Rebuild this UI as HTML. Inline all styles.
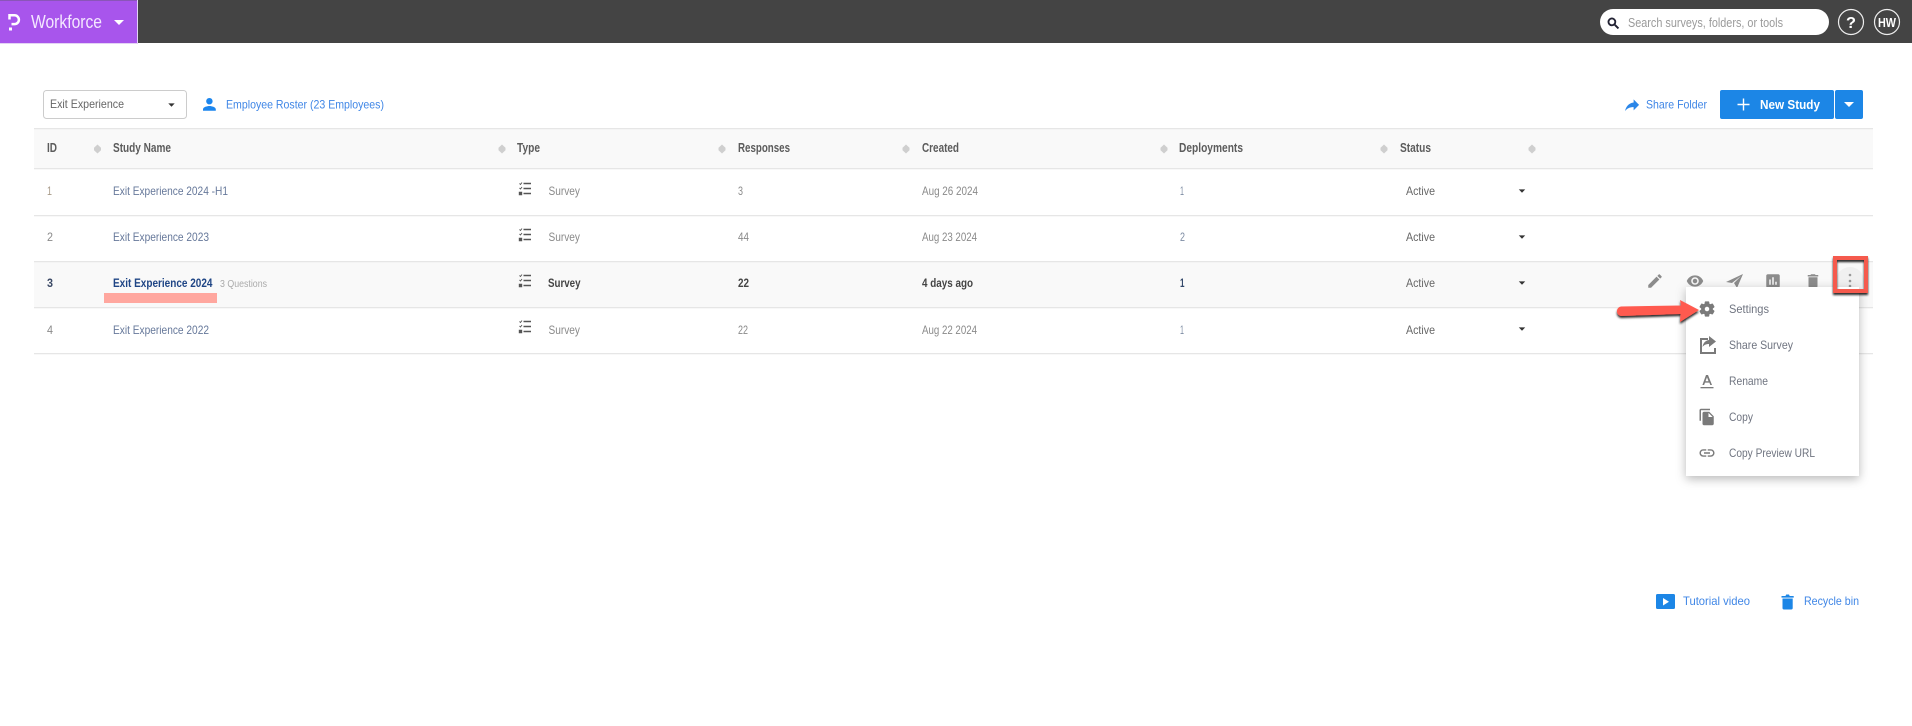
<!DOCTYPE html>
<html><head><meta charset="utf-8"><title>Workforce</title>
<style>
html,body{margin:0;padding:0;background:#fff;width:1912px;height:726px;overflow:hidden}
svg{display:block}
text{font-family:"Liberation Sans",sans-serif;font-size:12px;fill:#8a8a8a}
.h{font-size:12.5px;font-weight:bold;fill:#5c5c5c}
.st{fill:#66789a}
.b{font-weight:bold;fill:#444}
.bl{fill:#3f86e6}
.m{fill:#6f7480}
.a{fill:#666}
.dep{fill:#7d8ca3}
</style></head><body>
<svg width="1912" height="726" viewBox="0 0 1912 726" xmlns="http://www.w3.org/2000/svg">
<defs>
<filter id="ms" x="-20%" y="-20%" width="140%" height="140%"><feDropShadow dx="0" dy="3" stdDeviation="5" flood-color="#000" flood-opacity=".28"/></filter>
<filter id="as" x="-10%" y="-30%" width="120%" height="180%"><feDropShadow dx="0" dy="2" stdDeviation="1" flood-color="#000" flood-opacity=".85"/></filter>
<g id="s"><path d="M0-4.500 3.500-1.200V1.200L0 4.500-3.500 1.200V-1.200Z" fill="#cfcfcf"/></g>
<g id="c"><path d="M-3.200-1.600H3.200L0 1.800Z" fill="#333"/></g>
<g id="l" fill="none" stroke="#555" stroke-width="1.400"><path d="M4.500 1.500h7.500M4.500 6.500h7.500M4.500 11.500h7.500"/><path d="M.5 1.500l1 1 1.500-2M.5 6l1 1 1.500-2" stroke-width=".9"/><path d="M.5 10.500h2v2h-2z" fill="#555"/></g>
</defs>

<!-- top bar -->
<rect width="1912" height="43" fill="#444"/>
<rect width="138" height="44" fill="#e3d2f5"/>
<rect width="137" height="43" fill="#a855ec"/>
<rect width="137" height="1" fill="#8a55b8"/>
<path d="M9.500 19.500V15.300H14.500a4.400 4.400 0 0 1 0 8.800H11.500" fill="none" stroke="#fff" stroke-width="2.500"/>
<rect x="9" y="27.500" width="3" height="3" fill="#fff"/>
<text x="31" y="28" textLength="71" lengthAdjust="spacingAndGlyphs" style="font-size:18px;fill:#f4e8ff">Workforce</text>
<path d="M114 20H124L119 25Z" fill="#fff"/>

<rect x="1600" y="9" width="229" height="26" rx="13" fill="#fff"/>
<g transform="translate(1606,16) scale(.62)"><path d="M15.500 14h-.79l-.28-.27C15.410 12.590 16 11.110 16 9.500 16 5.910 13.090 3 9.500 3S3 5.910 3 9.500 5.910 16 9.500 16c1.610 0 3.090-.59 4.230-1.570l.27.28v.79l5 4.990L20.490 19l-4.990-5zm-6 0C7.010 14 5 11.990 5 9.500S7.010 5 9.500 5 14 7.010 14 9.500 11.990 14 9.500 14z" fill="#223" stroke="#223" stroke-width="1"/></g>
<text x="1628" y="27" textLength="155" lengthAdjust="spacingAndGlyphs" style="font-size:12.500px;fill:#9a9a9a">Search surveys, folders, or tools</text>
<circle cx="1851" cy="22" r="12.500" fill="none" stroke="#eee" stroke-width="1.200"/>
<text x="1846" y="28" textLength="10" lengthAdjust="spacingAndGlyphs" style="font-size:16px;font-weight:bold;fill:#fff">?</text>
<circle cx="1887" cy="22" r="12.500" fill="none" stroke="#eee" stroke-width="1.200"/>
<text x="1878" y="27" textLength="18" lengthAdjust="spacingAndGlyphs" style="font-size:13px;font-weight:bold;fill:#fff">HW</text>

<!-- toolbar -->
<rect x="43.500" y="90.500" width="143" height="28" rx="3" fill="#fff" stroke="#ccc"/>
<text x="50" y="108" textLength="74" lengthAdjust="spacingAndGlyphs" style="fill:#666">Exit Experience</text>
<use href="#c" x="171.500" y="105"/>
<g transform="translate(199.800,94.800) scale(.8)"><path d="M12 12c2.210 0 4-1.790 4-4s-1.790-4-4-4-4 1.790-4 4 1.790 4 4 4zm0 2c-2.670 0-8 1.340-8 4v2h16v-2c0-2.660-5.330-4-8-4z" fill="#1c86ee"/></g>
<text x="226" y="108.500" textLength="158" lengthAdjust="spacingAndGlyphs" class="bl">Employee Roster (23 Employees)</text>

<g transform="translate(1622.700,95.500) scale(.78)"><path d="M14 9V5l7 7-7 7v-4.100c-5 0-8.500 1.600-11 5.100 1-5 4-10 11-11z" fill="#2a86e8"/></g>
<text x="1646" y="108.500" textLength="61" lengthAdjust="spacingAndGlyphs" class="bl">Share Folder</text>
<rect x="1720" y="90" width="114" height="29" rx="2" fill="#1c86e6"/>
<rect x="1835" y="90" width="28" height="29" rx="2" fill="#1c86e6"/>
<path d="M1743.500 98.500v12M1737.500 104.500h12" stroke="#fff" stroke-width="1.400"/>
<text x="1760" y="109" textLength="60" lengthAdjust="spacingAndGlyphs" style="font-size:13px;font-weight:bold;fill:#fff">New Study</text>
<path d="M1844 102H1854L1849 107Z" fill="#fff"/>

<!-- table -->
<rect x="34" y="128" width="1839" height="40" fill="#f9f9f9"/>
<rect x="34" y="262" width="1839" height="45" fill="#f9f9f9"/>
<g fill="#e6e6e6">
<rect x="34" y="128" width="1839" height="1.300"/><rect x="34" y="168" width="1839" height="1.300"/><rect x="34" y="215" width="1839" height="1.300"/><rect x="34" y="261" width="1839" height="1.300"/><rect x="34" y="307" width="1839" height="1.300"/><rect x="34" y="353" width="1839" height="1.300"/>
</g>

<text x="47" y="152" textLength="10" lengthAdjust="spacingAndGlyphs" class="h">ID</text>
<text x="113" y="152" textLength="58" lengthAdjust="spacingAndGlyphs" class="h">Study Name</text>
<text x="517" y="152" textLength="23" lengthAdjust="spacingAndGlyphs" class="h">Type</text>
<text x="738" y="152" textLength="52" lengthAdjust="spacingAndGlyphs" class="h">Responses</text>
<text x="922" y="152" textLength="37" lengthAdjust="spacingAndGlyphs" class="h">Created</text>
<text x="1179" y="152" textLength="64" lengthAdjust="spacingAndGlyphs" class="h">Deployments</text>
<text x="1400" y="152" textLength="31" lengthAdjust="spacingAndGlyphs" class="h">Status</text>
<use href="#s" x="97.500" y="149"/><use href="#s" x="502" y="149"/><use href="#s" x="722" y="149"/><use href="#s" x="906" y="149"/><use href="#s" x="1164" y="149"/><use href="#s" x="1384" y="149"/><use href="#s" x="1532" y="149"/>

<!-- row 1 -->
<text x="47" y="195" textLength="5" lengthAdjust="spacingAndGlyphs" style="fill:#a89a88">1</text>
<text x="113" y="195" textLength="115" lengthAdjust="spacingAndGlyphs" class="st">Exit Experience 2024 -H1</text>
<use href="#l" x="519" y="182"/>
<text x="548.500" y="195" textLength="31.500" lengthAdjust="spacingAndGlyphs">Survey</text>
<text x="738" y="195" textLength="5" lengthAdjust="spacingAndGlyphs">3</text>
<text x="922" y="195" textLength="56" lengthAdjust="spacingAndGlyphs">Aug 26 2024</text>
<text x="1180" y="195" textLength="4" lengthAdjust="spacingAndGlyphs" class="dep">1</text>
<text x="1406" y="195" textLength="29" lengthAdjust="spacingAndGlyphs" class="a">Active</text>
<use href="#c" x="1522" y="191"/>

<!-- row 2 -->
<text x="47" y="241" textLength="6" lengthAdjust="spacingAndGlyphs">2</text>
<text x="113" y="241" textLength="96" lengthAdjust="spacingAndGlyphs" class="st">Exit Experience 2023</text>
<use href="#l" x="519" y="228"/>
<text x="548.500" y="241" textLength="31.500" lengthAdjust="spacingAndGlyphs">Survey</text>
<text x="738" y="241" textLength="11" lengthAdjust="spacingAndGlyphs">44</text>
<text x="922" y="241" textLength="55" lengthAdjust="spacingAndGlyphs">Aug 23 2024</text>
<text x="1180" y="241" textLength="5" lengthAdjust="spacingAndGlyphs" class="dep">2</text>
<text x="1406" y="241" textLength="29" lengthAdjust="spacingAndGlyphs" class="a">Active</text>
<use href="#c" x="1522" y="237"/>

<!-- row 3 -->
<text x="47" y="287" textLength="6" lengthAdjust="spacingAndGlyphs" style="font-weight:bold;fill:#3c4a66">3</text>
<text x="113" y="287" textLength="99.500" lengthAdjust="spacingAndGlyphs" style="font-weight:bold;fill:#1f4585">Exit Experience 2024</text>
<text x="220" y="287" textLength="47" lengthAdjust="spacingAndGlyphs" style="font-size:10px;fill:#aaa">3 Questions</text>
<rect x="104" y="293" width="113" height="10" fill="#ffa79f"/>
<use href="#l" x="519" y="274"/>
<text x="548" y="287" textLength="32.500" lengthAdjust="spacingAndGlyphs" class="b">Survey</text>
<text x="738" y="287" textLength="11" lengthAdjust="spacingAndGlyphs" class="b">22</text>
<text x="922" y="287" textLength="51" lengthAdjust="spacingAndGlyphs" class="b">4 days ago</text>
<text x="1180" y="287" textLength="4.500" lengthAdjust="spacingAndGlyphs" style="font-weight:bold;fill:#33486a">1</text>
<text x="1406" y="287" textLength="29" lengthAdjust="spacingAndGlyphs" class="a">Active</text>
<use href="#c" x="1522" y="283"/>

<!-- row 4 -->
<text x="47" y="334" textLength="6" lengthAdjust="spacingAndGlyphs">4</text>
<text x="113" y="334" textLength="96" lengthAdjust="spacingAndGlyphs" class="st">Exit Experience 2022</text>
<use href="#l" x="519" y="320"/>
<text x="548.500" y="334" textLength="31.500" lengthAdjust="spacingAndGlyphs">Survey</text>
<text x="738" y="334" textLength="10" lengthAdjust="spacingAndGlyphs">22</text>
<text x="922" y="334" textLength="55" lengthAdjust="spacingAndGlyphs">Aug 22 2024</text>
<text x="1180" y="334" textLength="4" lengthAdjust="spacingAndGlyphs" class="dep">1</text>
<text x="1406" y="334" textLength="29" lengthAdjust="spacingAndGlyphs" class="a">Active</text>
<use href="#c" x="1522" y="329"/>

<!-- row action icons -->
<g fill="#8c8c8c">
<g transform="translate(1646,272) scale(.75)"><path d="M3 17.250V21h3.750L17.810 9.940l-3.750-3.750L3 17.250zM20.710 7.040c.39-.39.39-1.020 0-1.410l-2.340-2.340c-.39-.39-1.020-.39-1.410 0l-1.830 1.830 3.750 3.750 1.830-1.830z"/></g>
<g transform="translate(1686,272) scale(.75)"><path d="M12 4.500C7 4.500 2.730 7.610 1 12c1.730 4.390 6 7.500 11 7.500s9.270-3.110 11-7.500c-1.730-4.390-6-7.500-11-7.500zM12 17c-2.760 0-5-2.240-5-5s2.240-5 5-5 5 2.240 5 5-2.240 5-5 5zm0-8c-1.660 0-3 1.340-3 3s1.340 3 3 3 3-1.340 3-3-1.340-3-3-3z"/></g>
<path d="M1726 282 1743 274 1737 288 1734 283 1741 276 1732 283Z"/>
<g transform="translate(1764,272) scale(.75)"><path d="M19 3H5c-1.100 0-2 .9-2 2v14c0 1.100.9 2 2 2h14c1.100 0 2-.9 2-2V5c0-1.100-.9-2-2-2zM9 17H7v-7h2v7zm4 0h-2V7h2v10zm4 0h-2v-4h2v4z"/></g>
<g transform="translate(1804,272) scale(.75)"><path d="M6 19c0 1.100.9 2 2 2h8c1.100 0 2-.9 2-2V7H6v12zM19 4h-3.500l-1-1h-5l-1 1H5v2h14V4z"/></g>
</g>
<circle cx="1850" cy="281" r="14" fill="#f0f0f0"/>
<circle cx="1850" cy="275" r="1.300" fill="#999"/><circle cx="1850" cy="281" r="1.300" fill="#999"/><circle cx="1850" cy="286" r="1.300" fill="#999"/>

<!-- dropdown -->
<rect x="1686" y="287" width="173" height="189" fill="#fff" filter="url(#ms)"/>
<rect x="1835" y="258" width="31" height="33" fill="none" stroke="#f55a4e" stroke-width="4" filter="url(#as)"/>
<g fill="#7a7a7a">
<g transform="translate(1698,300) scale(.75)"><path d="M19.140 12.940c.04-.3.06-.61.06-.94 0-.32-.02-.64-.07-.94l2.030-1.580c.18-.14.23-.41.12-.61l-1.920-3.320c-.12-.22-.37-.29-.59-.22l-2.390.96c-.5-.38-1.030-.7-1.620-.94l-.36-2.540c-.04-.24-.24-.41-.48-.41h-3.840c-.24 0-.43.17-.47.41l-.36 2.540c-.59.24-1.130.57-1.620.94l-2.390-.96c-.22-.08-.47 0-.59.22L2.740 8.870c-.12.21-.08.47.12.61l2.030 1.580c-.05.3-.09.63-.09.94s.02.64.07.94l-2.030 1.580c-.18.14-.23.41-.12.61l1.920 3.320c.12.22.37.29.59.22l2.390-.96c.5.38 1.030.7 1.620.94l.36 2.540c.05.24.24.41.48.41h3.840c.24 0 .44-.17.47-.41l.36-2.540c.59-.24 1.130-.56 1.620-.94l2.390.96c.22.08.47 0 .59-.22l1.920-3.320c.12-.22.07-.47-.12-.61l-2.010-1.580zM12 15.600c-1.980 0-3.600-1.620-3.600-3.600s1.620-3.600 3.600-3.600 3.600 1.620 3.600 3.600-1.620 3.600-3.600 3.600z" stroke="#7a7a7a" stroke-width="1.200"/></g>
<path d="M1700 338h8v2h-6v12h12v-4h2v6h-16Z"/>
<path d="M1709 340v-4l7 5.500-7 5.500v-3c-3 0-5 1-6.500 3 .5-3.500 2.500-6.500 6.500-7Z"/>
<path d="M1706 375h2l4 10h-1.700l-.9-2.400h-4.400l-.9 2.400h-1.700Zm-.5 6.200h3l-1.500-4Z"/>
<rect x="1700.500" y="387" width="13" height="1.300"/>
<g transform="translate(1698,408) scale(.75)"><path d="M16 1H4c-1.100 0-2 .9-2 2v14h2V3h12V1zm-1 4l6 6v10c0 1.100-.9 2-2 2H7.990C6.890 23 6 22.100 6 21l.01-14c0-1.100.89-2 1.990-2h7zm-1 7h5.500L14 6.500V12z"/></g>
<g transform="translate(1698,444) scale(.75)"><path d="M3.900 12c0-1.710 1.390-3.100 3.100-3.100h4V7H7c-2.760 0-5 2.240-5 5s2.240 5 5 5h4v-1.900H7c-1.710 0-3.100-1.390-3.100-3.100zM8 13h8v-2H8v2zm9-6h-4v1.900h4c1.710 0 3.100 1.390 3.100 3.100s-1.390 3.100-3.100 3.100h-4V17h4c2.760 0 5-2.240 5-5s-2.240-5-5-5z"/></g>
</g>
<text x="1729" y="313" textLength="40" lengthAdjust="spacingAndGlyphs" class="m">Settings</text>
<text x="1729" y="349" textLength="64" lengthAdjust="spacingAndGlyphs" class="m">Share Survey</text>
<text x="1729" y="385" textLength="39" lengthAdjust="spacingAndGlyphs" class="m">Rename</text>
<text x="1729" y="421" textLength="24" lengthAdjust="spacingAndGlyphs" class="m">Copy</text>
<text x="1729" y="457" textLength="86" lengthAdjust="spacingAndGlyphs" class="m">Copy Preview URL</text>

<!-- arrow -->
<path d="M1621 306.500 1681 305.500 1680 300 1699 310 1680 322 1680.500 314 1621 316a4.800 4.800 0 0 1 0-9.500Z" fill="#ff5a4f" filter="url(#as)"/>

<!-- bottom links -->
<rect x="1656" y="594" width="19" height="15" rx="1.500" fill="#1c86e6"/>
<path d="M1663 598v7.500l6-3.750Z" fill="#fff"/>
<text x="1683" y="605" textLength="67" lengthAdjust="spacingAndGlyphs" class="bl">Tutorial video</text>
<path d="M1781.500 596h4l.7-1.500h2.800l.7 1.500h4v1.600h-12.200ZM1782.500 598.500h10.200V608a1.500 1.500 0 0 1-1.500 1.500h-7.200a1.500 1.500 0 0 1-1.500-1.500Z" fill="#1c86e6"/>
<text x="1804" y="605" textLength="55" lengthAdjust="spacingAndGlyphs" class="bl">Recycle bin</text>
</svg>
</body></html>
